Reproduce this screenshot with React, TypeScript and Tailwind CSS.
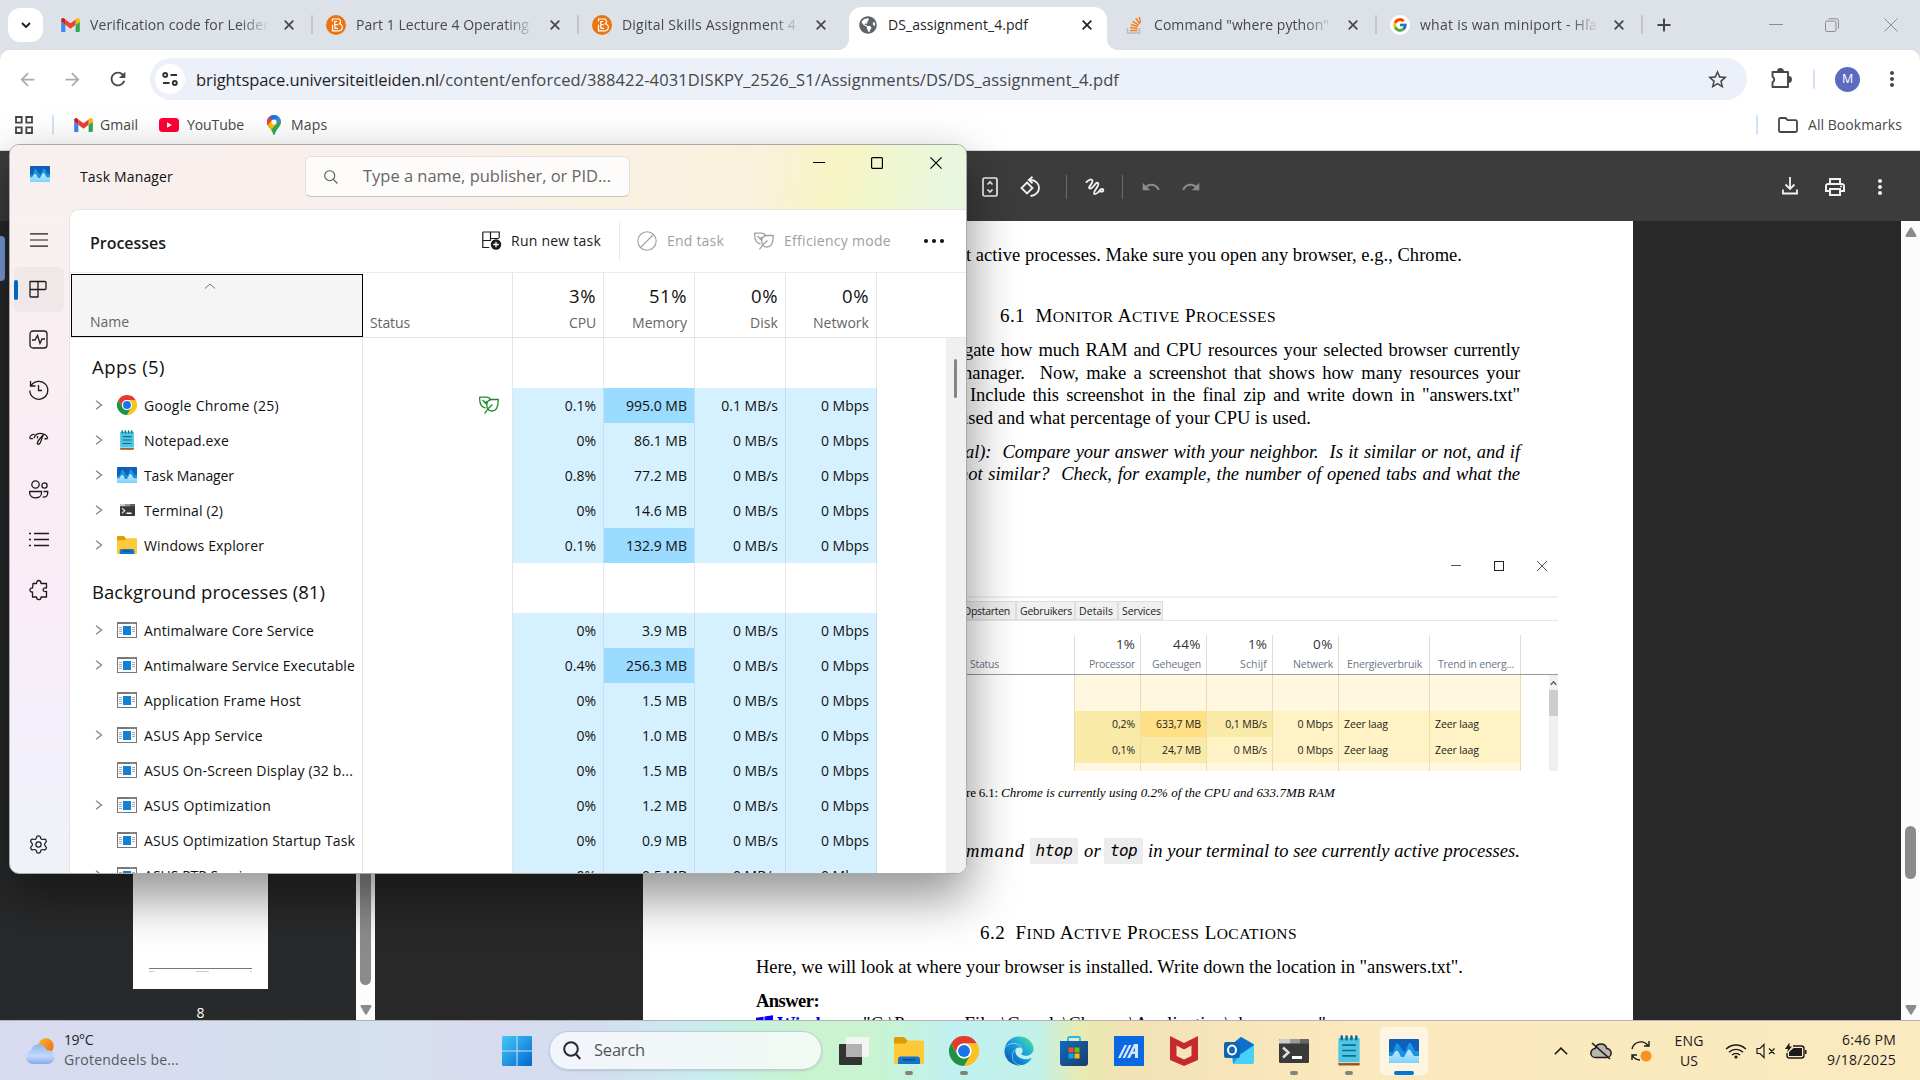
import React, { useLayoutEffect, useRef } from "react";
import { Settings } from "lucide-react";
import { FcGoogle } from "react-icons/fc";
import { FaEdge, FaGlobeAmericas } from "react-icons/fa";
import {
  MdArrowBack,
  MdArrowForward,
  MdRefresh,
  MdStarOutline,
  MdMoreVert,
  MdOutlinePrint,
  MdUndo,
  MdRedo,
} from "react-icons/md";

/* ---------- text fitted to a measured width ---------- */
function T({
  w,
  by = "letter",
  className = "",
  children,
}: {
  w: number;
  by?: "letter" | "word";
  className?: string;
  children: React.ReactNode;
}) {
  const ref = useRef<HTMLSpanElement>(null);
  useLayoutEffect(() => {
    const el = ref.current;
    if (!el) return;
    el.style.letterSpacing = by === "letter" ? "0px" : "";
    el.style.wordSpacing = "";
    const natural = el.getBoundingClientRect().width;
    const text = el.textContent || "";
    if (by === "letter") {
      el.style.letterSpacing = `${(w - natural) / Math.max(1, text.length)}px`;
    } else {
      const gaps = text.split(" ").length - 1;
      el.style.wordSpacing = `${(w - natural) / Math.max(1, gaps)}px`;
    }
  }, [w, by, children]);
  return (
    <span ref={ref} className={`inline-block shrink-0 whitespace-pre ${className}`}>
      {children}
    </span>
  );
}

/* ---------- brand icons ---------- */
const Gmail = () => (
  <svg viewBox="0 0 24 18" className="h-[14px] w-[19px]">
    <path d="M1.6 18H5.4V8.7L0 4.6V16.4C0 17.3.7 18 1.6 18Z" fill="#4285f4" />
    <path d="M18.6 18h3.8c.9 0 1.6-.7 1.6-1.6V4.6l-5.4 4.1Z" fill="#34a853" />
    <path d="M18.6 1.8v6.9L24 4.6V2.4c0-2-2.3-3.2-3.9-2Z" fill="#fbbc04" />
    <path d="M5.4 8.7V1.8L12 6.8l6.6-5v6.9L12 13.7Z" fill="#ea4335" />
    <path d="M0 2.4v2.2l5.4 4.1V1.8L3.9.5C2.3-.8 0 .4 0 2.4Z" fill="#c5221f" />
  </svg>
);
const YouTube = () => (
  <svg viewBox="0 0 20 14" className="h-[14px] w-5">
    <rect width="20" height="14" rx="3.5" fill="#ff0033" />
    <path d="M8 4.2 13 7l-5 2.800Z" fill="#fff" />
  </svg>
);
const Maps = () => (
  <svg viewBox="0 0 14 20" className="h-5 w-[14px]">
    <defs>
      <clipPath id="pin">
        <path d="M7 0a7 7 0 0 0-7 7c0 2 .8 3.400 2 5 1.800 2.300 3.200 4 4 6.800.3 1.600 1.700 1.600 2 0C8.800 16 10.200 14.300 12 12c1.200-1.600 2-3 2-5a7 7 0 0 0-7-7Z" />
      </clipPath>
    </defs>
    <g clipPath="url(#pin)">
      <path d="M0 0h14v20H0Z" fill="#34a853" />
      <path d="M0 14 14-2H0Z" fill="#1a73e8" />
      <path d="M-1 4 2.300 2 7 6 1 14Z" fill="#ea4335" />
      <path d="M0 11 5 5l4.500 4L3 16Z" fill="#fbbc04" />
      <path d="M7 7 14-1v7L9 9Z" fill="#4285f4" />
    </g>
    <circle cx="7" cy="7" r="2.600" fill="#fff" />
  </svg>
);
const Brightspace = () => (
  <svg viewBox="0 0 20 20" className="h-5 w-5">
    <circle cx="10" cy="10" r="10" fill="#e87511" />
    <path
      d="M6.500 6.500V4h5a2.700 2.700 0 0 1 2 4.800 3.300 3.300 0 0 1-1.500 7H6.500v-6M8.800 9V6.500h2.500M8.800 13.300V9.700h3M8.800 13.300h3.200"
      fill="none"
      stroke="#fff"
      strokeWidth="1.200"
    />
  </svg>
);
const StackOverflow = () => (
  <svg viewBox="0 0 16 20" className="h-5 w-4">
    <path d="M1.500 13v5h12v-5" fill="none" stroke="#bcbbbb" strokeWidth="1.600" />
    <path
      d="M4 15.500h7.500M4.100 12.600l7.400.8M4.900 9.500l7 2M6.700 6.300l5.900 3.800M9.800 3.200l3.900 5.600M13.300 1.800l1.200 6.400"
      stroke="#f48024"
      strokeWidth="1.500"
    />
  </svg>
);
const Chrome = ({ className }: { className: string }) => (
  <svg viewBox="0 0 48 48" className={className}>
    <path d="M3.200 12A24 24 0 0 1 44.800 12H24A12 12 0 0 0 13.600 30Z" fill="#e33b2e" />
    <path d="M44.800 12A24 24 0 0 1 24 48L34.400 30A12 12 0 0 0 24 12Z" fill="#fcc31e" />
    <path d="M24 48A24 24 0 0 1 3.200 12L13.600 30A12 12 0 0 0 34.400 30Z" fill="#229342" />
    <circle cx="24" cy="24" r="12" fill="#fff" />
    <circle cx="24" cy="24" r="9.500" fill="#1a73e8" />
  </svg>
);
const TaskMgr = ({ className }: { className: string }) => (
  <svg viewBox="0 0 30 24" className={className}>
    <defs>
      <linearGradient id="tm1" x1="0" y1="0" x2="0" y2="1">
        <stop offset="0" stopColor="#0f5fb8" />
        <stop offset="1" stopColor="#1065bd" />
      </linearGradient>
      <linearGradient id="tm2" x1="0" y1="0" x2="0" y2="1">
        <stop offset="0" stopColor="#1c9be8" />
        <stop offset="1" stopColor="#1488d8" />
      </linearGradient>
      <linearGradient id="tm3" x1="0" y1="0" x2="0" y2="1">
        <stop offset="0" stopColor="#c5edff" />
        <stop offset="1" stopColor="#7ed0fb" />
      </linearGradient>
    </defs>
    <rect width="30" height="24" rx="1" fill="url(#tm1)" />
    <path d="M0 13H4L7 5Q8.500 3 10 6L13 11 16 13 20 4Q21.500 3 23 6L26 12H30V24H0Z" fill="url(#tm2)" />
    <path d="M0 17H3L6 13Q8 10 10 14L12 18H15L19 11Q21 9 23 14L25 17H30V23Q30 24 29 24H1Q0 24 0 23Z" fill="url(#tm3)" />
  </svg>
);
const Notepad = ({ className }: { className: string }) => (
  <svg viewBox="0 0 24 32" className={className}>
    <rect x="1" y="27" width="22" height="4.500" rx="1" fill="#a34d10" />
    <rect x="1" y="27" width="22" height="2" fill="#e8e8e8" />
    <rect x="1" y="3" width="22" height="25" rx="1.500" fill="#50c4e3" />
    <path d="M5 10.500h14M5 16h14M5 21.500h14" stroke="#0d6c92" strokeWidth="1.800" />
    <path d="M4.500 1.500v3M9.500 1.500v3M14.500 1.500v3M19.500 1.500v3" stroke="#0d6c92" strokeWidth="2.600" strokeLinecap="round" />
  </svg>
);
const Terminal = ({ className }: { className: string }) => (
  <svg viewBox="0 0 30 24" className={className}>
    <rect width="30" height="24" rx="1.500" fill="#3a3a3a" />
    <path d="M0 4.500V1.500Q0 0 1.500 0H11V4.500Z" fill="#ccc" />
    <path d="M11 0h10v4.500H11Z" fill="#999" />
    <path d="M21 0h7.500Q30 0 30 1.500v3h-9Z" fill="#666" />
    <path d="m4 8.500 5.500 5-5.500 5" fill="none" stroke="#ddd" strokeWidth="2.500" />
    <path d="M13 18.500h10" stroke="#fff" strokeWidth="3" />
  </svg>
);
const Folder = ({ className }: { className: string }) => (
  <svg viewBox="0 0 30 27" className={className}>
    <path d="M0 1.500Q0 0 1.500 0H10l3.500 3.500V9H0Z" fill="#dd9c06" />
    <path d="M0 6.500h11.500l2.500-3h14.500Q30 3.500 30 5v20.500q0 1.500-1.500 1.500H1.500Q0 27 0 25.500Z" fill="#fdc937" />
    <path d="M4 27v-4.500q0-3 3-3H23q3 0 3 3V27Z" fill="#1473cc" />
    <path d="M9 22.800h12" stroke="#0a4b91" strokeWidth="1.500" />
  </svg>
);
const Generic = () => (
  <svg viewBox="0 0 20 16" className="h-4 w-5">
    <rect x=".5" y=".5" width="19" height="15" fill="#fdfdfd" stroke="#777" />
    <path d="M0 0h20v2H0Z" fill="#777" />
    <path d="M2 5.500h3M2 7.500h3M2 9.500h3M2 11.500h3M15 5.500h3M15 7.500h3M15 9.500h3M13 1h1M15 1h1M17 1h1" stroke="#aaa" />
    <rect x="6" y="4" width="8" height="9" fill="#1380d4" />
  </svg>
);
const Leaves = ({ className }: { className: string }) => (
  <svg viewBox="0 0 20 18" fill="none" stroke="currentColor" strokeWidth="1.300" strokeLinejoin="round" className={className}>
    <path d="M6.500 12C2 11 .3 7.500.7 1.200H7C9.500 1.200 11 2.300 11.500 3.500" />
    <path d="M3.500 4l4 4.300M7.200 8V4.800" />
    <path d="M19.300 3.500H13C9 3.500 7 6.500 8 11 8.500 14 10 15 13 15c4.500 0 6.300-3.500 6.300-11.500Z" />
    <path d="M5.500 17.500Q8.500 12.500 13.500 8.500" />
  </svg>
);

/* ---------- browser ---------- */
const Close = ({ dark = false }: { dark?: boolean }) => (
  <svg viewBox="0 0 10 10" className={dark ? "h-[10px] w-[10px] text-[#1f1f1f]" : "h-[10px] w-[10px] text-[#444746]"}>
    <path d="m.7.7 8.600 8.600M9.300.7.7 9.300" stroke="currentColor" strokeWidth="1.700" />
  </svg>
);

const tabs = [
  { icon: <Gmail />, title: "Verification code for Leider", w: 179 },
  { icon: <Brightspace />, title: "Part 1 Lecture 4 Operating", w: 173 },
  { icon: <Brightspace />, title: "Digital Skills Assignment 4", w: 174 },
  { icon: <FaGlobeAmericas className="h-[18px] w-[18px] text-[#5f6368]" />, title: "DS_assignment_4.pdf", w: 140, active: true },
  { icon: <StackOverflow />, title: 'Command "where python"', w: 175 },
  {
    icon: (
      <span className="flex h-5 w-5 items-center justify-center rounded-full bg-white">
        <FcGoogle className="h-4 w-4" />
      </span>
    ),
    title: "what is wan miniport - Hľa",
    w: 177,
  },
];

function TabStrip() {
  return (
    <div className="flex h-[50px] bg-[#dde1e8]">
      <div className="flex w-[47px] items-center pl-2">
        <div className="flex h-[34px] w-[35px] items-center justify-center rounded-[12px] bg-white">
          <svg viewBox="0 0 10 6" className="h-[6px] w-[10px]">
            <path d="m1 1 4 4 4-4" fill="none" stroke="#1f1f1f" strokeWidth="1.900" />
          </svg>
        </div>
      </div>
      {tabs.map((t, i) => (
        <div key={i} className="relative flex w-[266px] items-center">
          {t.active && (
            <>
              <div className="absolute bottom-0 left-[4px] top-[7px] w-[258px] rounded-t-[13px] bg-white" />
              <div className="absolute bottom-0 -left-[8px] h-3 w-3 bg-[radial-gradient(circle_at_0_0,#dde1e8_12px,#fff_12.500px)]" />
              <div className="absolute bottom-0 left-[262px] h-3 w-3 bg-[radial-gradient(circle_at_100%_0,#dde1e8_12px,#fff_12.500px)]" />
            </>
          )}
          <div className="relative flex w-full items-center pl-[13px]">
            <span className="flex w-5 justify-center">{t.icon}</span>
            <span
              className={
                t.active
                  ? "ml-[10px] flex w-[183px] text-[14px] leading-5 text-[#1f1f1f]"
                  : "ml-[10px] flex w-[183px] text-[14px] leading-5 text-[#45494e] [mask-image:linear-gradient(90deg,#000_82%,transparent_98%)]"
              }
            >
              <T w={t.w}>{t.title}</T>
            </span>
            <span className="ml-[11px]">
              <Close dark={t.active} />
            </span>
          </div>
          {i !== 3 && i !== 2 && <div className="absolute right-0 top-[15px] h-[19px] w-[2px] rounded bg-[#c2c4c9]" />}
        </div>
      ))}
      <div className="flex w-[42px] items-center justify-center">
        <svg viewBox="0 0 14 14" className="h-[14px] w-[14px]">
          <path d="M7 .5v13M.5 7h13" stroke="#444746" strokeWidth="2" />
        </svg>
      </div>
      <div className="ml-auto flex items-center gap-[43px] pr-[22px] text-[#8b8e93]">
        <svg viewBox="0 0 14 14" className="-mr-px h-[14px] w-[14px]">
          <path d="M0 6.500h14" stroke="currentColor" />
        </svg>
        <svg viewBox="0 0 14 14" className="mr-[2px] h-[14px] w-[14px]" fill="none" stroke="currentColor">
          <rect x=".5" y="3" width="10.500" height="10.500" rx="1.500" />
          <path d="M3.500.7H11q2.500 0 2.500 2.500v7.500" />
        </svg>
        <svg viewBox="0 0 14 14" className="h-[14px] w-[14px]">
          <path d="m.5.5 13 13M13.500.5l-13 13" stroke="currentColor" />
        </svg>
      </div>
    </div>
  );
}

function AddressBar() {
  return (
    <div className="bg-[#dde1e8]">
      <div className="flex h-[58px] items-center rounded-t-[10px] bg-white text-[#474747]">
        <MdArrowBack className="ml-[17px] h-[21px] w-[21px] text-[#a9abae]" />
        <MdArrowForward className="ml-[24px] h-[21px] w-[21px] text-[#a9abae]" />
        <MdRefresh className="ml-[24px] h-[22px] w-[22px]" />
        <div className="ml-[21px] flex h-[42px] w-[1597px] items-center rounded-full bg-[#ecf0f9] pl-[5px] pr-[18px]">
          <div className="flex h-[30px] w-[30px] items-center justify-center rounded-full bg-white">
            <svg viewBox="0 0 16 16" className="h-4 w-4" fill="none" stroke="#333" strokeWidth="1.900">
              <circle cx="3.200" cy="4" r="2" />
              <path d="M8.500 4H15M1 12h6.500" />
              <circle cx="12.800" cy="12" r="2" />
            </svg>
          </div>
          <div className="ml-[11px] mt-px flex text-[16.500px] leading-6">
            <T w={243} className="text-[#1f1f1f]">brightspace.universiteitleiden.nl</T>
            <T w={680} className="text-[#474747]">
              /content/enforced/388422-4031DISKPY_2526_S1/Assignments/DS/DS_assignment_4.pdf
            </T>
          </div>
          <MdStarOutline className="ml-auto h-[23px] w-[23px]" />
        </div>
        <svg viewBox="0 0 22 22" className="ml-[23px] h-[22px] w-[22px]" fill="none" stroke="#444746" strokeWidth="1.900">
          <path d="M2.500 4H18v15H2.500v-4.500q3.500-3 0-6Z" strokeLinejoin="round" />
          <path d="M8 3.500a2.500 2.500 0 0 1 5 0M18.500 9a2.500 2.500 0 0 1 0 5" fill="#444746" />
        </svg>
        <div className="ml-[21px] h-5 w-[2px] rounded bg-[#d3e3fd]" />
        <div className="ml-[20px] flex h-[25px] w-[25px] items-center justify-center rounded-full bg-[#5c6bc0] text-[12.500px] text-white">M</div>
        <MdMoreVert className="ml-[20px] h-6 w-6" />
      </div>
      <div className="flex h-[42px] items-start bg-white pt-[7px] text-[14px] text-[#474747]">
        <div className="flex h-5 w-full items-center">
          <svg viewBox="0 0 18 18" className="ml-[15px] h-[18px] w-[18px]" fill="none" stroke="#444746" strokeWidth="1.800">
            <path d="M1 1h5.700v5.700H1ZM11.300 1H17v5.700h-5.700ZM1 11.300h5.700V17H1ZM11.300 11.300H17V17h-5.700Z" />
          </svg>
          <div className="ml-[19px] mr-[20px] h-5 w-[2px] rounded bg-[#d3e3fd]" />
          <Gmail />
          <T w={38} className="-mt-px ml-[7px]">Gmail</T>
          <span className="ml-[21px] flex"><YouTube /></span>
          <T w={57} className="-mt-px ml-[8px]">YouTube</T>
          <span className="ml-[23px] flex"><Maps /></span>
          <T w={36.5} className="-mt-px ml-[10px]">Maps</T>
          <div className="ml-auto h-5 w-[2px] rounded bg-[#d3e3fd]" />
          <svg viewBox="0 0 20 16" className="ml-[20px] h-4 w-5" fill="none" stroke="#444746" strokeWidth="1.800">
            <path d="M1 2.500Q1 1 2.500 1H7.500l2.200 2.200h7.800q1.500 0 1.500 1.500V13.500q0 1.500-1.500 1.500h-15Q1 15 1 13.500Z" />
          </svg>
          <T w={94} className="-mt-px ml-[10px] mr-[18px]">All Bookmarks</T>
        </div>
      </div>
    </div>
  );
}

function PdfToolbar() {
  return (
    <div className="flex h-[70px] items-center bg-[#3c3c3c] pl-[980px] pr-[31px] pt-[2px] text-[#f1f1f1]">
      <svg viewBox="0 0 20 20" className="h-5 w-5" fill="none" stroke="currentColor" strokeWidth="1.700">
        <rect x="3" y="1" width="14" height="18" rx="1.500" />
        <path d="m7.500 7.500 2.500-2.500 2.500 2.500M7.500 12.500l2.500 2.500 2.500-2.500" />
      </svg>
      <svg viewBox="0 0 22 22" className="ml-[19px] h-[22px] w-[22px]" fill="none" stroke="currentColor" strokeWidth="1.800">
        <path d="M13.500.8 9.800 4l3.700 3.300M10.500 4C22.500 3.500 23.500 18.500 11.500 20" />
        <path d="M8 6.500l5.500 5.500L8 17.500 2.500 12Z" />
      </svg>
      <div className="ml-[25px] h-6 w-px bg-[#6a6a6a]" />
      <svg viewBox="0 0 20 18" className="ml-[18px] h-[18px] w-5" fill="none" stroke="currentColor" strokeWidth="1.900" strokeLinecap="round">
        <path d="M1.500 4C4 1.500 7 .5 7.500 3S2 9.500 5 10.500 10.500 3 13 5 7 14.500 9.500 16s7-7.500 8.500-4.500-3 2-3 2" />
      </svg>
      <div className="ml-[17px] h-6 w-px bg-[#6a6a6a]" />
      <MdUndo className="ml-[18px] h-5 w-5 text-[#8c8c8c]" />
      <MdRedo className="ml-[20px] h-5 w-5 text-[#8c8c8c]" />
      <svg viewBox="0 0 16 18" className="-mt-[2px] ml-auto h-[18px] w-4" fill="none" stroke="currentColor" strokeWidth="1.800">
        <path d="M8 0v11.500M3.500 7.500 8 12l4.500-4.500M1 12.500V16.500h14v-4" />
      </svg>
      <MdOutlinePrint className="-mt-px ml-[25px] h-[24px] w-[24px]" />
      <MdMoreVert className="-mt-px ml-[21px] mr-[-3px] h-6 w-6" />
    </div>
  );
}

/* ---------- document ---------- */
const figCols = [
  { pct: "1%", label: "Processor", pw: 19, lw: 46 },
  { pct: "44%", label: "Geheugen", pw: 28, lw: 49 },
  { pct: "1%", label: "Schijf", pw: 19, lw: 27 },
  { pct: "0%", label: "Netwerk", pw: 20, lw: 40 },
];
const figRows = [
  ["0,2%", "633,7 MB", "0,1 MB/s", "0 Mbps", "Zeer laag", "Zeer laag"],
  ["0,1%", "24,7 MB", "0 MB/s", "0 Mbps", "Zeer laag", "Zeer laag"],
];
const figGrid = "grid grid-cols-[66px_66px_66px_66px_91px_91px]";

function Figure() {
  return (
    <div className="ml-[80px] mr-[75px] flex h-[222px] flex-col text-[10.500px] text-[#222]">
      <div className="flex h-[49px] items-start justify-end gap-[33px] border-b-2 border-[#f0f0f0] pr-[11px] pt-[12px] text-[#555]">
        <svg viewBox="0 0 10 10" className="h-[10px] w-[10px]"><path d="M0 4.500h10" stroke="currentColor" /></svg>
        <svg viewBox="0 0 10 10" className="h-[10px] w-[10px]"><rect x=".5" y=".5" width="9" height="9" fill="none" stroke="#222" /></svg>
        <svg viewBox="0 0 10 10" className="h-[10px] w-[10px]"><path d="m0 0 10 10M10 0 0 10" stroke="currentColor" /></svg>
      </div>
      <div className="mt-[3px] flex h-[20px] border-b border-[#e8e8e8] pl-[235px] leading-[19px]">
        <div className="w-[58px] border border-[#ddd] bg-[#f0f0f0] pl-1"><T w={47}>Opstarten</T></div>
        <div className="w-[59px] border border-[#ddd] bg-[#f0f0f0] pl-[3px]"><T w={52}>Gebruikers</T></div>
        <div className="w-[43px] border border-[#ddd] bg-[#f0f0f0] pl-[3px]"><T w={34}>Details</T></div>
        <div className="w-[45px] border border-[#ddd] bg-[#f0f0f0] pl-[3px]"><T w={39}>Services</T></div>
      </div>
      <div className="mt-[14px] flex h-[40px] border-b border-[#999]">
        <div className="flex w-[351px] items-end pb-px pl-[247px] text-[#6a7686]"><T w={29}>Status</T></div>
        <div className={`${figGrid} border-l border-[#ddd]`}>
          {figCols.map((c) => (
            <div key={c.label} className="flex flex-col items-end border-r border-[#ddd] pr-[5px] text-[#6a7686]">
              <span className="h-[19px] text-[13.500px] leading-[19px] text-[#333]"><T w={c.pw}>{c.pct}</T></span>
              <span className="leading-[20px]"><T w={c.lw}>{c.label}</T></span>
            </div>
          ))}
          <div className="border-r border-[#ddd] pl-[8px] pt-[19px] leading-[20px] text-[#6a7686]"><T w={75}>Energieverbruik</T></div>
          <div className="border-r border-[#ddd] pl-[8px] pt-[19px] leading-[20px] text-[#6a7686]"><T w={76}>Trend in energ...</T></div>
        </div>
      </div>
      <div className="flex h-[96px]">
        <div className="ml-[351px] border-l border-[#efdcae]">
          <div className={`${figGrid} h-[36px] bg-[#fff7e0]`}>
            {[0, 1, 2, 3, 4, 5].map((i) => <div key={i} className="border-r border-[#efdcae]" />)}
          </div>
          {figRows.map((r, ri) => (
            <div key={ri} className={`${figGrid} h-[26px] leading-[26px]`}>
              {r.map((v, ci) => (
                <div
                  key={ci}
                  className={[
                    "border-r border-[#efdcae]",
                    ci < 4 ? "pr-[5px] text-right" : "pl-[5px]",
                    ri === 0 && ci === 1
                      ? "bg-[#ffe084]"
                      : ci === 0 || ci === 1 || (ri === 0 && ci === 2)
                        ? "bg-[#f9eaa8]"
                        : "bg-[#fff2c4]",
                  ].join(" ")}
                >
                  <span className="tracking-[-0.100px]">{v}</span>
                </div>
              ))}
            </div>
          ))}
          <div className={`${figGrid} h-[8px] bg-[#fff7e0]`}>
            {[0, 1, 2, 3, 4, 5].map((i) => <div key={i} className="border-r border-[#efdcae]" />)}
          </div>
        </div>
        <div className="ml-auto flex w-[9px] flex-col items-center bg-[#f0f0f0]">
          <svg viewBox="0 0 8 6" className="mt-[5px] h-[6px] w-[7px]"><path d="m1 5 3-3.500L7 5" fill="none" stroke="#555" strokeWidth="1.500" /></svg>
          <div className="mt-[4px] h-[26px] w-full bg-[#cdcdcd]" />
        </div>
      </div>
    </div>
  );
}

const serif = "font-['Liberation_Serif',serif]";

function Heading({ num, w, words }: { num: string; w: number; words: string[] }) {
  return (
    <T w={w} className="text-[19px]">
      {num}
      {"  "}
      {words.map((x, i) => (
        <React.Fragment key={x}>
          {i > 0 ? " " : ""}
          {x[0]}
          <span className="text-[15.500px]">{x.slice(1).toUpperCase()}</span>
        </React.Fragment>
      ))}
    </T>
  );
}

function PdfPage() {
  return (
    <div className="flex h-[799px] w-[990px] flex-col overflow-hidden bg-white text-black">
      <div className={`${serif} flex flex-col items-end pr-[113px] pt-[23px] text-[18.500px] leading-[23px] tracking-[-0.060px]`}>
        <div className="mr-[58px] h-[23px]"><T w={496}>t active processes. Make sure you open any browser, e.g., Chrome.</T></div>
        <div className="mr-[244px] mt-[37px] h-[23px]"><Heading num="6.1" w={276} words={["Monitor", "Active", "Processes"]} /></div>
        <div className="mt-[12px] h-[23px]"><T w={556} by="word">gate how much RAM and CPU resources your selected browser currently</T></div>
        <div className="h-[22px]"><T w={562} by="word">manager.  Now, make a screenshot that shows how many resources your</T></div>
        <div className="h-[23px]"><T w={550} by="word">Include this screenshot in the final zip and write down in "answers.txt"</T></div>
        <div className="mr-[209px] h-[23px]"><T w={352}>used and what percentage of your CPU is used.</T></div>
        <div className="mt-[11px] h-[22px] italic"><T w={555} by="word">al):  Compare your answer with your neighbor.  Is it similar or not, and if</T></div>
        <div className="h-[22px] italic"><T w={561} by="word">not similar?  Check, for example, the number of opened tabs and what the</T></div>
        <div className="mr-[553px] h-[22px] italic">.</div>
      </div>
      <div className="mt-[42px]"><Figure /></div>
      <div className={`${serif} mt-[12px] flex h-[20px] pl-[323px] text-[13px] leading-5`}>
        <T w={35}>re 6.1: </T>
        <T w={334} className="italic">Chrome is currently using 0.2% of the CPU and 633.7MB RAM</T>
      </div>
      <div className={`${serif} mt-[35px] flex h-[27px] items-center pl-[323px] text-[18.500px] italic leading-6`}>
        <T w={59}>mmand</T>
        <span className="ml-[5px] flex h-[26px] w-[48px] items-center justify-center bg-[#ececec] font-['DejaVu_Sans_Mono',monospace] text-[16px]">
          <T w={37}>htop</T>
        </span>
        <T w={17} className="ml-[6px]">or</T>
        <span className="ml-[3px] flex h-[26px] w-[39px] items-center justify-center bg-[#ececec] font-['DejaVu_Sans_Mono',monospace] text-[16px]">
          <T w={27}>top</T>
        </span>
        <T w={372} className="ml-[5px]">in your terminal to see currently active processes.</T>
      </div>
      <div className={`${serif} flex flex-col pl-[113px] text-[18.500px] leading-6`}>
        <div className="ml-[224px] mt-[57px] h-6"><Heading num="6.2" w={317} words={["Find", "Active", "Process", "Locations"]} /></div>
        <div className="mt-[10px] h-6"><T w={707}>Here, we will look at where your browser is installed. Write down the location in "answers.txt".</T></div>
        <div className="mt-[10px] h-6 font-bold"><T w={63}>Answer:</T></div>
        <div className="flex h-6 items-start">
          <svg viewBox="0 0 18 18" className="mt-[2px] h-[17px] w-[17px]" fill="#0000ff">
            <path d="M0 3 8 1.800V9H0ZM9 1.700 18 .3V9H9ZM0 10h8v7L0 15.700ZM9 10h9v8.500L9 17Z" />
          </svg>
          <T w={79} className="-mt-px ml-[4px] font-bold text-[#0000ff]">Windows:</T>
          <T w={463} className="-mt-px ml-[7px]">"C:\Program Files\Google\Chrome\Application\chrome.exe"</T>
        </div>
      </div>
    </div>
  );
}

const Tri = ({ up = false }: { up?: boolean }) => (
  <svg viewBox="0 0 12 10" className={up ? "h-[10px] w-3 rotate-180" : "h-[10px] w-3"}>
    <path d="M1.500 0h9q1.500.5.8 1.800L7 9q-1 1.300-2 0L.7 1.800Q0 .5 1.500 0Z" fill="#8b8b8b" />
  </svg>
);

function Viewer() {
  return (
    <div className="flex h-[799px] bg-[#282828]">
      <div className="flex w-[356px] flex-col bg-[#28292a]">
        <div className="mt-[15px] h-[45px] w-[5px] shrink-0 rounded-r bg-[#7ba0e0]" />
        <div className="ml-[133px] mt-[516px] flex h-[192px] w-[135px] shrink-0 flex-col justify-end bg-white px-4 pb-[17px]">
          <div className="h-px bg-[#777]" />
          <div className="mt-[2px] flex justify-between"><i className="h-px w-[5px] bg-[#ccc]" /><i className="h-px w-[13px] bg-[#ccc]" /><i className="h-px w-[2px] bg-[#ccc]" /></div>
        </div>
        <div className="mt-[14px] w-[401px] text-center text-[14px] leading-[19px] text-white">8</div>
      </div>
      <div className="flex w-[19px] flex-col items-center bg-[#fcfcfc]">
        <div className="mt-[100px] h-[664px] w-[11px] rounded-full bg-[#8b8b8b]" />
        <span className="mt-auto pb-[5px]"><Tri /></span>
      </div>
      <div className="ml-[268px]"><PdfPage /></div>
      <div className="ml-auto flex w-[19px] flex-col items-center bg-[#fcfcfc]">
        <span className="flex pt-[6px]"><Tri up /></span>
        <div className="mt-[589px] h-[53px] w-[11px] rounded-full bg-[#8b8b8b]" />
        <span className="mt-auto pb-[5px]"><Tri /></span>
      </div>
    </div>
  );
}

/* ---------- task manager window ---------- */
type Proc = { n: string; w: number; icon: React.ReactNode; exp?: boolean; leaf?: boolean; v: [string, string, string, string]; hot?: boolean };
const apps: Proc[] = [
  { n: "Google Chrome (25)", w: 135, icon: <Chrome className="h-5 w-5" />, exp: true, leaf: true, v: ["0.1%", "995.0 MB", "0.1 MB/s", "0 Mbps"], hot: true },
  { n: "Notepad.exe", w: 85, icon: <Notepad className="h-5 w-4" />, exp: true, v: ["0%", "86.1 MB", "0 MB/s", "0 Mbps"] },
  { n: "Task Manager", w: 90, icon: <TaskMgr className="h-4 w-5" />, exp: true, v: ["0.8%", "77.2 MB", "0 MB/s", "0 Mbps"] },
  { n: "Terminal (2)", w: 79, icon: <Terminal className="h-3 w-[15px]" />, exp: true, v: ["0%", "14.6 MB", "0 MB/s", "0 Mbps"] },
  { n: "Windows Explorer", w: 120, icon: <Folder className="h-[18px] w-5" />, exp: true, v: ["0.1%", "132.9 MB", "0 MB/s", "0 Mbps"], hot: true },
];
const bg: Proc[] = [
  { n: "Antimalware Core Service", w: 170, icon: <Generic />, exp: true, v: ["0%", "3.9 MB", "0 MB/s", "0 Mbps"] },
  { n: "Antimalware Service Executable", w: 211, icon: <Generic />, exp: true, v: ["0.4%", "256.3 MB", "0 MB/s", "0 Mbps"], hot: true },
  { n: "Application Frame Host", w: 157, icon: <Generic />, v: ["0%", "1.5 MB", "0 MB/s", "0 Mbps"] },
  { n: "ASUS App Service", w: 119, icon: <Generic />, exp: true, v: ["0%", "1.0 MB", "0 MB/s", "0 Mbps"] },
  { n: "ASUS On-Screen Display (32 b...", w: 209, icon: <Generic />, v: ["0%", "1.5 MB", "0 MB/s", "0 Mbps"] },
  { n: "ASUS Optimization", w: 127, icon: <Generic />, exp: true, v: ["0%", "1.2 MB", "0 MB/s", "0 Mbps"] },
  { n: "ASUS Optimization Startup Task", w: 211, icon: <Generic />, v: ["0%", "0.9 MB", "0 MB/s", "0 Mbps"] },
  { n: "ASUS PTP Service", w: 113, icon: <Generic />, exp: true, v: ["0%", "0.5 MB", "0 MB/s", "0 Mbps"] },
];
const grid = "grid grid-cols-[293px_150px_91px_91px_91px_91px_1fr]";

function Row({ p }: { p: Proc }) {
  return (
    <div className={`${grid} h-[35px] shrink-0 text-[14px] leading-[35px] text-[#111]`}>
      <div className="flex items-center border-r border-[#e5e5e5] pl-[25px]">
        <span className="flex w-[22px]">
          {p.exp && (
            <svg viewBox="0 0 8 10" className="-mt-px h-[10px] w-2"><path d="m1 .8 5.500 4.200L1 9.200" fill="none" stroke="#888" strokeWidth="1.400" /></svg>
          )}
        </span>
        <span className="-mt-px flex w-5 justify-center">{p.icon}</span>
        <T w={p.w} className="ml-[7px]">{p.n}</T>
      </div>
      <div className="flex items-center justify-end border-r border-[#e5e5e5] pr-[13px]">
        {p.leaf && <Leaves className="-mt-px h-[18px] w-5 text-[#1d8a2b]" />}
      </div>
      {p.v.map((v, i) => (
        <div
          key={i}
          className={
            i === 1 && p.hot
              ? "border-r border-[#c5dfee] bg-[#9bdbff] pr-[7px] text-right"
              : "border-r border-[#c5dfee] bg-[#d5f1ff] pr-[7px] text-right"
          }
        >
          {v}
        </div>
      ))}
      <div />
    </div>
  );
}
function Group({ label, w }: { label: string; w: number }) {
  return (
    <div className={`${grid} h-[50px] shrink-0`}>
      <div className="border-r border-[#e5e5e5] pl-[22px] pt-[8px] text-[18.500px] leading-[42px] text-[#111]"><T w={w}>{label}</T></div>
      {[0, 1, 2, 3, 4].map((i) => <div key={i} className="border-r border-[#e5e5e5]" />)}
      <div />
    </div>
  );
}
const headCols = [
  { p: "3%", l: "CPU", pw: 27, lw: 27 },
  { p: "51%", l: "Memory", pw: 38, lw: 55 },
  { p: "0%", l: "Disk", pw: 27, lw: 28 },
  { p: "0%", l: "Network", pw: 27, lw: 56 },
];

const navIcons = [
  <path key="a" d="M1 1.500h8v8H1ZM9 1.500h7q1 0 1 1v6q0 1-1 1H9v7.500H2q-1 0-1-1v-6.500" strokeLinejoin="round" />,
  <g key="b"><rect x="1" y="1" width="17" height="17" rx="3" /><path d="M3 10h3l2.500-4.500 2.500 8 2-4.500h3" /></g>,
  <path key="c" d="M1.500 1v5h5M2 5.800A9 9 0 1 1 .8 10.500M9.500 5v5.500H13" />,
  <path key="d" d="M.5 8.500C1 5 4 4 5.500 4.500M1 8.500l3 .2M5 8C6 4 10 2.500 14.500 4c3 1 4 3 4.200 4.500M14.500 4.500C12 9 12 15.500 8.500 14 7 12 11 9 14.500 4.500ZM8.500 6v2.500M18.500 8.500 15.500 9" />,
  <g key="e"><circle cx="6.500" cy="4.500" r="3.700" /><circle cx="15.500" cy="5.500" r="2.600" /><path d="M.7 11.500h11.800v1.800c0 6-11.800 6-11.800 0ZM14.500 11.500h4.200v1.500q0 4.500-5 4" /></g>,
  <path key="f" d="M5 3.500h15M5 9.500h15M5 15.500h15M0 3.500h2M0 9.500h2M0 15.500h2" strokeWidth="1.500" />,
  <path key="g" d="M4 3.500h3.500C7.500-.5 12-.5 12 3.500h5.500V8C13 7 13 12.500 17.500 11.500V17H12c.5 3.500-4.500 3.500-4.500 0H3.500V12C0 12.500 0 7.500 3.500 8Z" strokeLinejoin="round" />,
];

function TaskManager() {
  return (
    <div className="absolute left-[9px] top-[144px] flex h-[730px] w-[958px] flex-col overflow-hidden rounded-[10px] border border-[#a9a9a9] bg-[linear-gradient(180deg,#f8f0ee_0%,#f9eff1_20%,#faecf6_60%,#f3effa_80%,#eff2f9_100%)] shadow-[0_22px_50px_2px_rgba(0,0,0,0.420)]">
      <div className="flex h-[64px] shrink-0 bg-[linear-gradient(100deg,#f8f0ee_0%,#f9efed_45%,#f9f0e3_58%,#f9f1dc_78%,#f8f5c4_86%,#f0f7cf_91%,#eaf7df_98%)]">
        <TaskMgr className="ml-[20px] mt-[21px] h-4 w-5" />
        <span className="ml-[30px] mt-[21px] text-[14px] leading-[22px] text-[#111]"><T w={93}>Task Manager</T></span>
        <div className="ml-[132px] mt-[11px] flex h-[41px] w-[325px] items-center rounded-[6px] border border-[#e4dfdc] border-b-[#c9c4c0] bg-[#fdfcfa]">
          <svg viewBox="0 0 14 14" className="ml-[18px] h-[14px] w-[14px]" fill="none" stroke="#555" strokeWidth="1.100">
            <circle cx="5.700" cy="5.700" r="5" /><path d="m9.300 9.300 4.200 4.200" />
          </svg>
          <T w={248} className="ml-[25px] text-[16.500px] text-[#666]">Type a name, publisher, or PID...</T>
        </div>
        <div className="ml-auto mr-[24px] mt-[12px] flex h-[12px] gap-[47px] text-black">
          <svg viewBox="0 0 12 12" className="-mr-px h-3 w-3"><path d="M0 5.500h12" stroke="currentColor" strokeWidth="1.200" /></svg>
          <svg viewBox="0 0 12 12" className="h-3 w-3"><rect x=".6" y=".6" width="10.800" height="10.800" rx="1" fill="none" stroke="currentColor" strokeWidth="1.200" /></svg>
          <svg viewBox="0 0 12 12" className="h-3 w-3"><path d="m.4.4 11.200 11.200M11.600.4.4 11.600" stroke="currentColor" strokeWidth="1.200" /></svg>
        </div>
      </div>
      <div className="flex min-h-0 flex-1">
        <div className="flex w-[59px] flex-col pl-[4px] pt-[8px] text-[#1b1b1b]">
          <div className="flex h-[45px] w-[50px] items-center justify-center">
            <svg viewBox="0 0 18 14" className="h-[14px] w-[18px]"><path d="M0 .8h18M0 7h18M0 13.200h18" stroke="currentColor" strokeWidth="1.200" /></svg>
          </div>
          {navIcons.map((d, i) => (
            <div
              key={i}
              className={
                i === 0
                  ? "mt-[5px] flex h-[45px] w-[50px] items-center rounded-[6px] bg-[#f0e7e8]"
                  : "mt-[5px] flex h-[45px] w-[50px] items-center pl-[4px]"
              }
            >
              {i === 0 && <span className="h-5 w-1 rounded-full bg-[#0067c0]" />}
              <svg viewBox="0 0 20 19" className="ml-[11px] h-[19px] w-5 overflow-visible" fill="none" stroke="currentColor" strokeWidth="1.300">{d}</svg>
            </div>
          ))}
          <div className="mb-[18px] mt-auto flex w-[49px] justify-center"><Settings className="h-[21px] w-[21px]" strokeWidth={1.4} /></div>
        </div>
        <div className="flex min-w-0 flex-1 flex-col rounded-tl-[10px] border-l border-t border-[#e8e2e2] bg-white">
          <div className="flex h-[63px] shrink-0 items-center border-b border-[#ececec] pb-px text-[14px]">
            <T w={76} className="ml-[20px] mt-1 text-[16px] font-semibold text-[#1b1b1b]">Processes</T>
            <svg viewBox="0 0 20 19" className="ml-[316px] h-[19px] w-5" fill="none" stroke="#1b1b1b" strokeWidth="1.200">
              <path d="M.8 1h16.400v6M8.500 1v8.500M.8 9.500h8M.8 1v15.500h6.500M8.500 7.500H17" />
              <circle cx="14" cy="13.500" r="5.200" fill="#1b1b1b" stroke="none" />
              <path d="M14 10.700v5.600M11.200 13.500h5.600" stroke="#fff" strokeWidth="1.300" />
            </svg>
            <T w={90} className="ml-[9px] text-[#1b1b1b]">Run new task</T>
            <div className="ml-[18px] h-[39px] w-px bg-[#e8e8e8]" />
            <svg viewBox="0 0 20 20" className="ml-[17px] h-5 w-5" fill="none" stroke="#a0a0a0" strokeWidth="1.100"><circle cx="10" cy="10" r="9.200" /><path d="M16 4 4 16" /></svg>
            <T w={57} className="ml-[10px] text-[#a0a0a0]">End task</T>
            <Leaves className="ml-[30px] h-[18px] w-5 text-[#a0a0a0]" />
            <T w={107} className="ml-[10px] text-[#a0a0a0]">Efficiency mode</T>
            <svg viewBox="0 0 20 4" className="ml-[33px] h-1 w-5" fill="#111"><circle cx="2" cy="2" r="2" /><circle cx="10" cy="2" r="2" /><circle cx="18" cy="2" r="2" /></svg>
          </div>
          <div className={`${grid} h-[65px] shrink-0 border-b border-[#e5e5e5] text-[14px] text-[#666]`}>
            <div className="ml-[1px] mt-[1px] flex h-[63px] flex-col items-start border border-black bg-[#f5f5f5]">
              <svg viewBox="0 0 12 6" className="ml-[132px] mt-[8px] h-[6px] w-3"><path d="m1 5.500 5-4.500 5 4.500" fill="none" stroke="#777" /></svg>
              <T w={39} className="ml-[18px] mt-[23px] leading-[20px]">Name</T>
            </div>
            <div className="border-r border-[#e5e5e5] pl-[7px] pt-[40px] leading-[20px]"><T w={40}>Status</T></div>
            {headCols.map((c) => (
              <div key={c.l} className="flex flex-col items-end border-r border-[#e5e5e5] pr-[7px] pt-[10px]">
                <T w={c.pw} className="text-[18.500px] leading-[26px] text-[#111]">{c.p}</T>
                <T w={c.lw} className="mt-[4px] leading-[20px]">{c.l}</T>
              </div>
            ))}
            <div />
          </div>
          <div className="flex min-h-0 flex-1">
            <div className="flex min-w-0 flex-1 flex-col overflow-hidden">
              <Group label="Apps (5)" w={73} />
              {apps.map((p) => <Row key={p.n} p={p} />)}
              <Group label="Background processes (81)" w={233} />
              {bg.map((p) => <Row key={p.n} p={p} />)}
            </div>
            <div className="w-[20px] bg-[#f0f0f0] pl-[8px] pt-[21px]"><div className="h-[39px] w-[3px] rounded bg-[#868686]" /></div>
          </div>
        </div>
      </div>
    </div>
  );
}

/* ---------- taskbar ---------- */
function Pinned({ children, dot }: { children: React.ReactNode; dot?: "run" | "active" }) {
  return (
    <div className="flex w-[55px] justify-center">
      <div
        className={
          dot === "active"
            ? "relative flex h-[48px] w-[48px] items-center justify-center rounded-[5px] bg-[#fdf5df] shadow-[0_0_0_1px_#f6ead0]"
            : "relative flex h-[48px] w-[48px] items-center justify-center"
        }
      >
        {children}
        {dot === "run" && <span className="absolute bottom-0 h-1 w-2 rounded-full bg-[#7f8578]" />}
        {dot === "active" && <span className="absolute bottom-0 h-1 w-5 rounded-full bg-[#0078d4]" />}
      </div>
    </div>
  );
}

function Taskbar() {
  return (
    <div className="relative flex h-[60px] items-center border-t border-[#b3b3b6] bg-[linear-gradient(90deg,#d8dbf0_0px,#d8dcf0_170px,#d2deee_290px,#d5e0ee_380px,#d8dbf0_480px,#d3def0_600px,#c8eeee_710px,#c9f4cf_800px,#c9f4cf_870px,#c1f1f0_950px,#c2f1e8_1040px,#e8eab0_1080px,#f3e2b6_1130px,#fbe9bd_1350px,#fbeabf_1920px)]">
      <svg viewBox="0 0 32 28" className="ml-[24px] mt-[1px] h-[28px] w-[32px]">
        <defs>
          <linearGradient id="sun" x1="0" y1="0" x2="1" y2="1"><stop offset="0" stopColor="#fbb32b" /><stop offset="1" stopColor="#ef6a12" /></linearGradient>
          <linearGradient id="cld" x1="0" y1="0" x2="0" y2="1"><stop offset="0" stopColor="#8fb4f0" /><stop offset=".6" stopColor="#c3d9fb" /><stop offset="1" stopColor="#86aaf0" /></linearGradient>
        </defs>
        <circle cx="22" cy="9" r="7.700" fill="url(#sun)" />
        <path d="M8 27a7 7 0 0 1-1-13.500A8 8 0 0 1 22.500 13 7 7 0 0 1 24.500 27Z" fill="url(#cld)" />
      </svg>
      <div className="-mt-[2px] ml-[8px] flex w-[430px] flex-col text-[14px] leading-[20px]">
        <T w={29} className="self-start text-[#222]">19°C</T>
        <T w={115} className="self-start text-[#555a62]">Grotendeels be...</T>
      </div>
      <svg viewBox="0 0 30 30" className="ml-[8px] h-[30px] w-[30px]">
        <defs><linearGradient id="win" x1="0" y1="0" x2="1" y2="1"><stop offset="0" stopColor="#46c8f8" /><stop offset="1" stopColor="#0069cf" /></linearGradient></defs>
        <path d="M1 0h13.500v14.500H0V1Q0 0 1 0ZM15.500 0H29q1 0 1 1v13.500H15.500ZM0 15.500h14.500V30H1q-1 0-1-1ZM15.500 15.500H30V29q0 1-1 1H15.500Z" fill="url(#win)" />
      </svg>
      <div className="ml-[17px] flex h-[39px] w-[273px] items-center rounded-full border border-[#bfcbd8] bg-[linear-gradient(90deg,#f3f5fc,#f0f7f8_60%,#f1fbf1)] shadow-sm">
        <svg viewBox="0 0 18 19" className="ml-[13px] h-[19px] w-[18px]" fill="none" stroke="#2a2a2a" strokeWidth="2">
          <circle cx="8" cy="8" r="6.800" /><path d="m12.800 13 4.500 5" />
        </svg>
        <T w={51} className="ml-[13px] text-[16.500px] text-[#555]">Search</T>
      </div>
      <div className="ml-[4px] flex">
        <Pinned>
          <svg viewBox="0 0 30 28" className="h-[28px] w-[30px]">
            <rect y="7" width="23" height="21" rx="1" fill="#333" />
            <rect x="7" width="23" height="20" rx="1" fill="#f4f4f4" fillOpacity=".95" />
            <rect x="7" y="7" width="16" height="13" fill="#b2b2b2" />
          </svg>
        </Pinned>
        <Pinned dot="run"><Folder className="h-[27px] w-[30px]" /></Pinned>
        <Pinned dot="run"><Chrome className="h-[30px] w-[30px]" /></Pinned>
        <Pinned>
          <svg className="absolute h-0 w-0">
            <defs><linearGradient id="edge" x1="0" y1="1" x2="1" y2="0"><stop offset="0" stopColor="#0c4fa8" /><stop offset=".45" stopColor="#1490df" /><stop offset=".75" stopColor="#2cc3c8" /><stop offset="1" stopColor="#6be04f" /></linearGradient></defs>
          </svg>
          <FaEdge className="h-[30px] w-[30px] fill-[url(#edge)]" />
        </Pinned>
        <Pinned>
          <svg viewBox="0 0 30 30" className="h-[30px] w-[30px]">
            <defs><linearGradient id="store" x1="0" y1="0" x2="1" y2="1"><stop offset="0" stopColor="#0f6cbf" /><stop offset="1" stopColor="#1d3a68" /></linearGradient></defs>
            <path d="M9 6V2.500Q9 1 10.500 1h9Q21 1 21 2.500V6" fill="none" stroke="#22b8f0" strokeWidth="1.800" />
            <path d="M1 5h28v22q0 3-3 3H4q-3 0-3-3Z" fill="url(#store)" />
            <path d="M9.500 11.500h5v5h-5Z" fill="#f25022" /><path d="M15.500 11.500h5v5h-5Z" fill="#7fba00" />
            <path d="M9.500 17.500h5v5h-5Z" fill="#00a4ef" /><path d="M15.500 17.500h5v5h-5Z" fill="#ffb900" />
          </svg>
        </Pinned>
        <Pinned>
          <svg viewBox="0 0 30 30" className="h-[30px] w-[30px]">
            <rect width="30" height="30" fill="#0a68e0" />
            <path d="M4 22 10.500 9H13L6.500 22ZM8.500 22 15 9h2.500L11 22ZM13 22 20 8h4v14h-3v-4h-3l-2 4ZM19 15.500h2V11.500Z" fill="#d5e6fa" fillRule="evenodd" />
          </svg>
        </Pinned>
        <Pinned>
          <svg viewBox="0 0 28 30" className="h-[30px] w-[28px]">
            <path d="M0 0 14 7 28 0V24L14 30 0 24Z" fill="#c62a2c" />
            <path d="M6.500 9.500 14 13.500l7.500-4V20L14 23.500 6.500 20Z" fill="#f6e5bb" />
          </svg>
        </Pinned>
        <Pinned>
          <svg viewBox="0 0 30 28" className="h-[28px] w-[30px]">
            <path d="M7 8 17 0 30 7.500V24q0 3-3 3H9Z" fill="#1a9fe6" />
            <path d="M7 8 17 0l13 7.500L17 17Z" fill="#0f6fcb" />
            <path d="M17 17 30 8.500V24q0 3-3 3H9Z" fill="#47d0f8" />
            <rect y="5" width="16" height="16" rx="2" fill="#0f66b5" />
            <ellipse cx="8" cy="13" rx="4" ry="4.500" fill="none" stroke="#fff" strokeWidth="2" />
          </svg>
        </Pinned>
        <Pinned dot="run"><Terminal className="h-[24px] w-[30px]" /></Pinned>
        <Pinned dot="run"><Notepad className="h-[31px] w-[24px]" /></Pinned>
        <Pinned dot="active"><TaskMgr className="h-[24px] w-[30px]" /></Pinned>
      </div>
      <div className="ml-auto flex items-center text-[#1b1b1b]">
        <svg viewBox="0 0 14 8" className="h-2 w-[14px]"><path d="m.8 7.200 6.200-6 6.200 6" fill="none" stroke="currentColor" strokeWidth="1.600" /></svg>
        <svg viewBox="0 0 22 18" className="ml-[22px] h-[18px] w-[22px]" fill="none" stroke="currentColor" strokeWidth="1.500">
          <path d="M5.500 15.500a4.500 4.500 0 0 1-.3-9A6 6 0 0 1 16.800 6.500a4.500 4.500 0 0 1-.3 9Z" fill="#b9b6b0" />
          <path d="M2 1l18 16" strokeWidth="1.600" />
        </svg>
        <svg viewBox="0 0 22 22" className="ml-[18px] h-[22px] w-[22px]" fill="none" stroke="currentColor" strokeWidth="1.400">
          <path d="M2 9A9 9 0 0 1 18 5.500M19 1v5h-5M2 20v-5h5M2.500 15.500q2 4 7.500 4.500" />
          <circle cx="16" cy="16" r="5.500" fill="#f7941d" stroke="none" />
        </svg>
        <div className="ml-[22px] flex w-[30px] flex-col items-center text-[14px] leading-[20px]"><T w={29}>ENG</T><T w={18}>US</T></div>
        <svg viewBox="0 0 22 16" className="ml-[21px] h-4 w-[22px]" fill="none" stroke="currentColor" strokeWidth="1.400">
          <path d="M1.200 6a14 14 0 0 1 19.600 0M4 9.200a10 10 0 0 1 14 0M7 12a6 6 0 0 1 8 0" />
          <circle cx="11" cy="14" r="1.600" fill="currentColor" stroke="none" />
        </svg>
        <svg viewBox="0 0 20 16" className="ml-[9px] h-4 w-5" fill="none" stroke="currentColor" strokeWidth="1.200">
          <path d="M1 5.500h3l4-4v13l-4-4H1ZM13 5.500l5.500 5.500M18.500 5.500 13 11" />
        </svg>
        <svg viewBox="0 0 22 16" className="ml-[9px] h-4 w-[22px]">
          <path d="M8 3h8.500Q19 3 19 5.500v7Q19 15 16.500 15h-12Q2 15 2 12.500V10" fill="none" stroke="currentColor" strokeWidth="1.400" />
          <path d="M8.500 5h8.500v8H4V9Z" fill="currentColor" /><path d="M20 7h1.500v4H20Z" fill="currentColor" />
          <path d="M4.500-.5 0 6h3L2 9.500 7 3.500H4.500Z" fill="currentColor" />
        </svg>
        <div className="-mt-[2px] ml-[20px] mr-[24px] flex w-[69px] flex-col items-end text-[14px] leading-[20px]"><T w={54}>6:46 PM</T><T w={69}>9/18/2025</T></div>
      </div>
    </div>
  );
}

export default function App() {
  return (
    <div className="relative flex h-[1080px] w-[1920px] flex-col overflow-hidden bg-white font-['Open_Sans',sans-serif]">
      <TabStrip />
      <AddressBar />
      <div className="h-px bg-[#d9d9d9]" />
      <PdfToolbar />
      <Viewer />
      <TaskManager />
      <Taskbar />
    </div>
  );
}
